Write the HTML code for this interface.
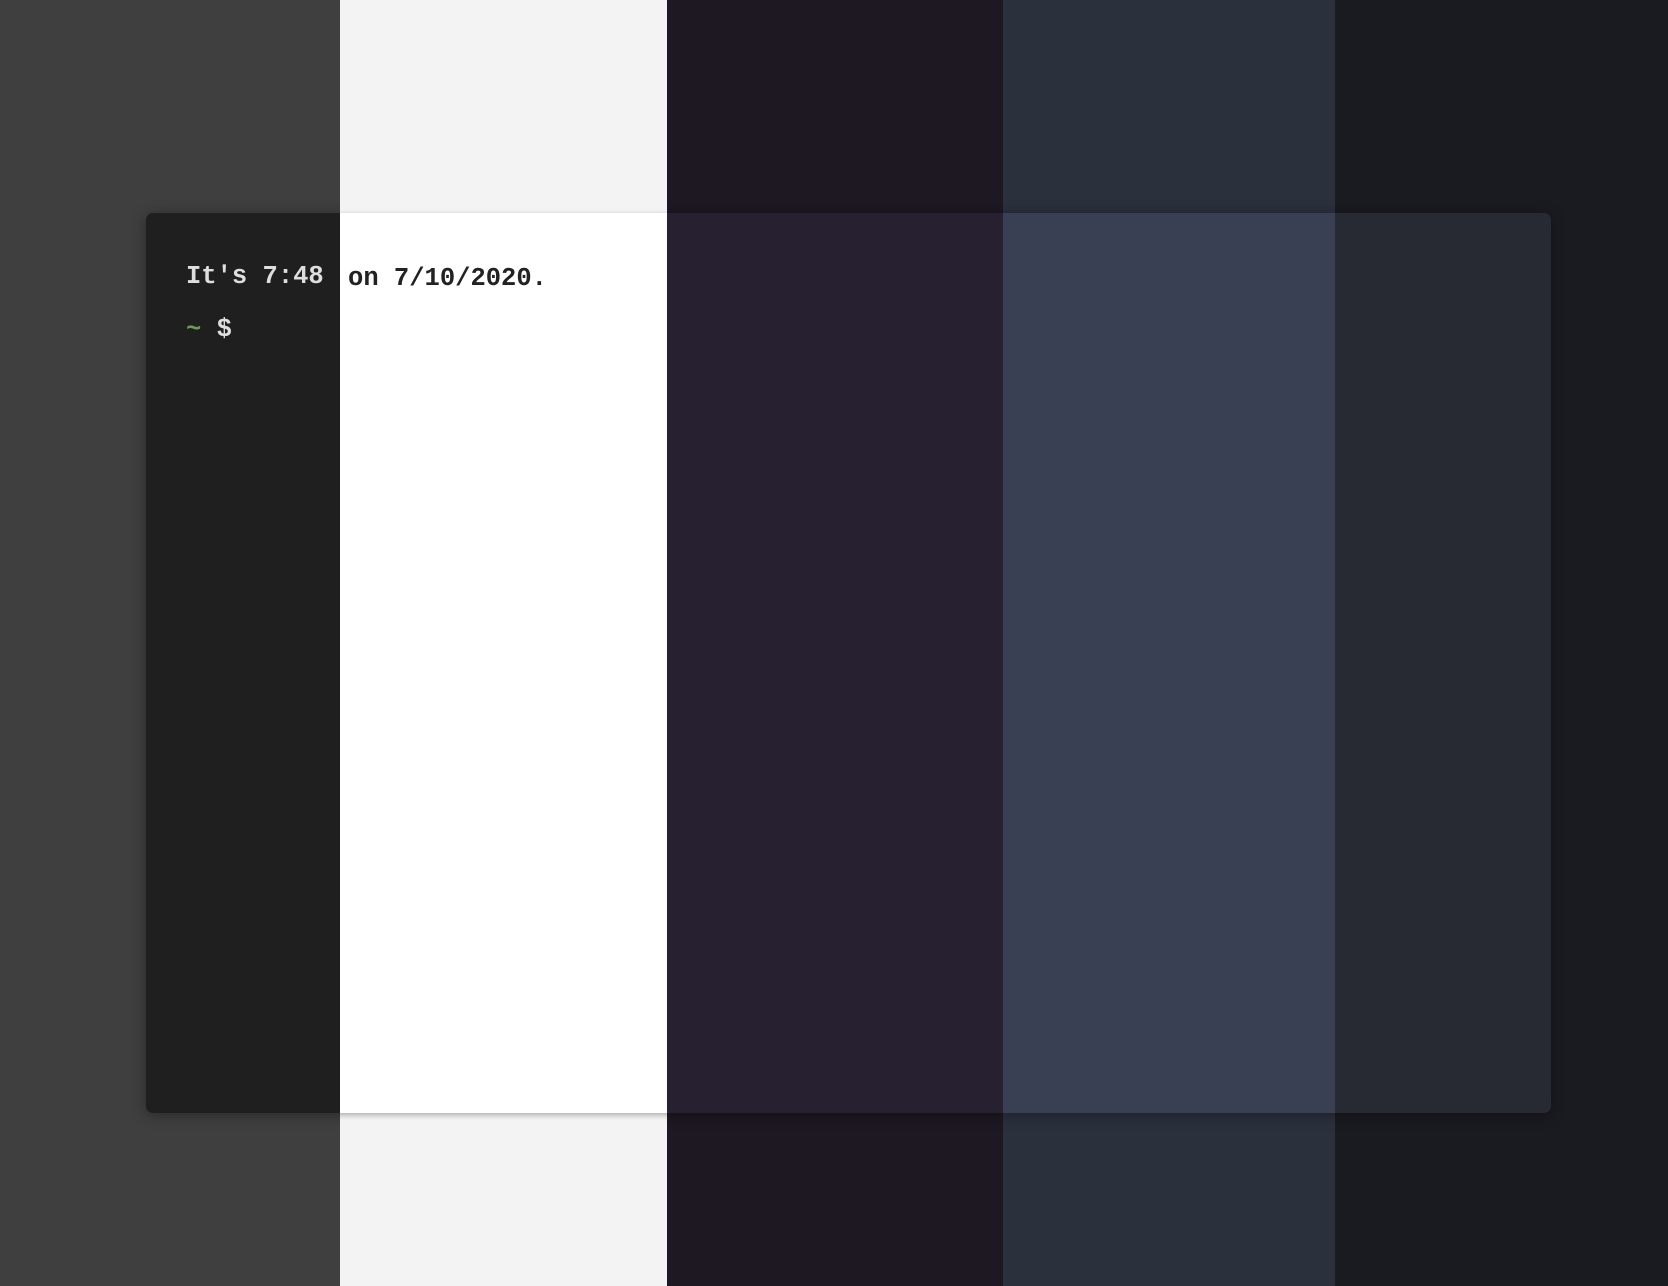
<!DOCTYPE html>
<html><head><meta charset="utf-8"><style>
html,body{margin:0;padding:0;width:1668px;height:1286px;overflow:hidden}
.l{position:absolute;left:0;top:0;width:1668px;height:1286px}
.c{position:absolute;left:146px;top:213px;width:1405px;height:900px;border-radius:7px;box-shadow:0 2px 14px rgba(0,0,0,.35)}
.t{position:absolute;left:186px;font:bold 25.5px "Liberation Mono",monospace;white-space:pre}
</style></head><body>
<div class="l" style="background:#3f3f3f;clip-path:inset(0 1328px 0 0)"><div class="c" style="background:#1f1f1f"></div>
<div class="t" style="top:262px;color:#dedede">It's 7:48 on 7/10/2020.</div>
<div class="t" style="top:315px;color:#dedede"><span style="color:#6a9a55">~</span> $</div></div>
<div class="l" style="background:#f3f3f3;clip-path:inset(0 1001px 0 340px)"><div class="c" style="background:#fff;box-shadow:0 2px 6px rgba(0,0,0,.3)"></div>
<div class="t" style="top:264px;left:195px;color:#222">It's 7:48 on 7/10/2020.</div></div>
<div class="l" style="background:#1d1822;clip-path:inset(0 665px 0 667px)"><div class="c" style="background:#272030"></div></div>
<div class="l" style="background:#2b303d;clip-path:inset(0 333px 0 1003px)"><div class="c" style="background:#3a4053"></div></div>
<div class="l" style="background:#1a1a21;clip-path:inset(0 0 0 1335px)"><div class="c" style="background:#272933"></div></div>
</body></html>
